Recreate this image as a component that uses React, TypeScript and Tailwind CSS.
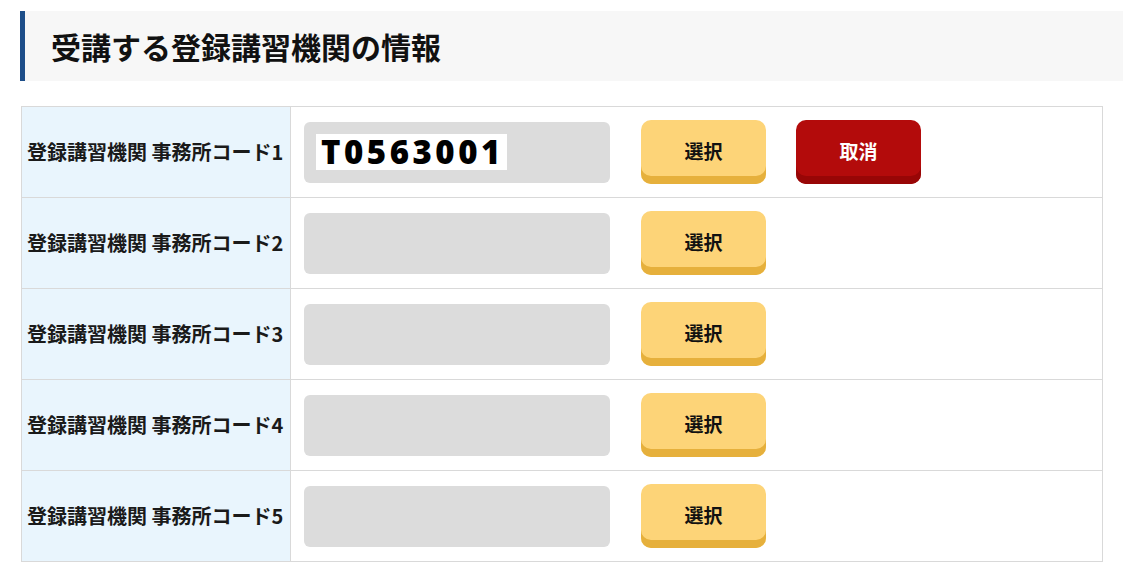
import React from "react";

const jp = '"Noto Sans CJK JP", "Noto Sans", sans-serif';

function SelectButton() {
  return (
    <button
      className="h-[64px] w-[125px] shrink-0 rounded-[10px] bg-[#fdd478] text-[19px] font-bold text-[#111] shadow-[inset_0_-8px_0_#e6b03c]"
      style={{ fontFamily: jp }}
    >
      <span className="relative top-[-1px]">選択</span>
    </button>
  );
}

function CancelButton() {
  return (
    <button
      className="h-[64px] w-[125px] shrink-0 rounded-[10px] bg-[#b30b0b] text-[19px] font-bold text-white shadow-[inset_0_-8px_0_#980606]"
      style={{ fontFamily: jp }}
    >
      <span className="relative top-[-1px]">取消</span>
    </button>
  );
}

function Row({ n, value, first }: { n: number; value?: string; first?: boolean }) {
  return (
    <div className={"flex " + (first ? "h-[90px]" : "h-[91px] border-t border-[#d9d9d9]")}>
      <div className="flex w-[269px] shrink-0 items-center border-r border-[#d9d9d9] bg-[#e9f5fd] pl-[5px]">
        <span className="whitespace-nowrap text-[20px] font-bold text-[#1a1a1a]" style={{ fontFamily: jp }}>
          登録講習機関 事務所コード{n}
        </span>
      </div>
      <div className="flex flex-1 items-center pl-[13px]">
        <div className="flex h-[61px] w-[306px] shrink-0 items-center rounded-[6px] bg-[#dcdcdc] pl-[12px]">
          {value && (
            <span
              className="bg-white pl-[5px] pr-[3px] text-[33px] font-extrabold leading-[36px] tracking-[3.5px] text-black"
              style={{ fontFamily: '"Open Sans", "Noto Sans", sans-serif' }}
            >
              {value}
            </span>
          )}
        </div>
        <div className="ml-[31px]">
          <SelectButton />
        </div>
        {value && (
          <div className="ml-[30px]">
            <CancelButton />
          </div>
        )}
      </div>
    </div>
  );
}

export default function App() {
  return (
    <div className="min-h-[578px] w-[1123px] overflow-hidden bg-white pl-[20px] pt-[11px]">
      <div className="flex h-[70px] w-[1103px] items-center border-l-[5px] border-[#1d4e89] bg-[#f7f7f7] pl-[26px]">
        <h2 className="text-[30px] font-bold text-[#111]" style={{ fontFamily: jp }}>
          受講する登録講習機関の情報
        </h2>
      </div>
      <div className="ml-px mt-[25px] w-[1082px] border border-[#d9d9d9]">
        <Row n={1} value="T0563001" first />
        <Row n={2} />
        <Row n={3} />
        <Row n={4} />
        <Row n={5} />
      </div>
    </div>
  );
}
